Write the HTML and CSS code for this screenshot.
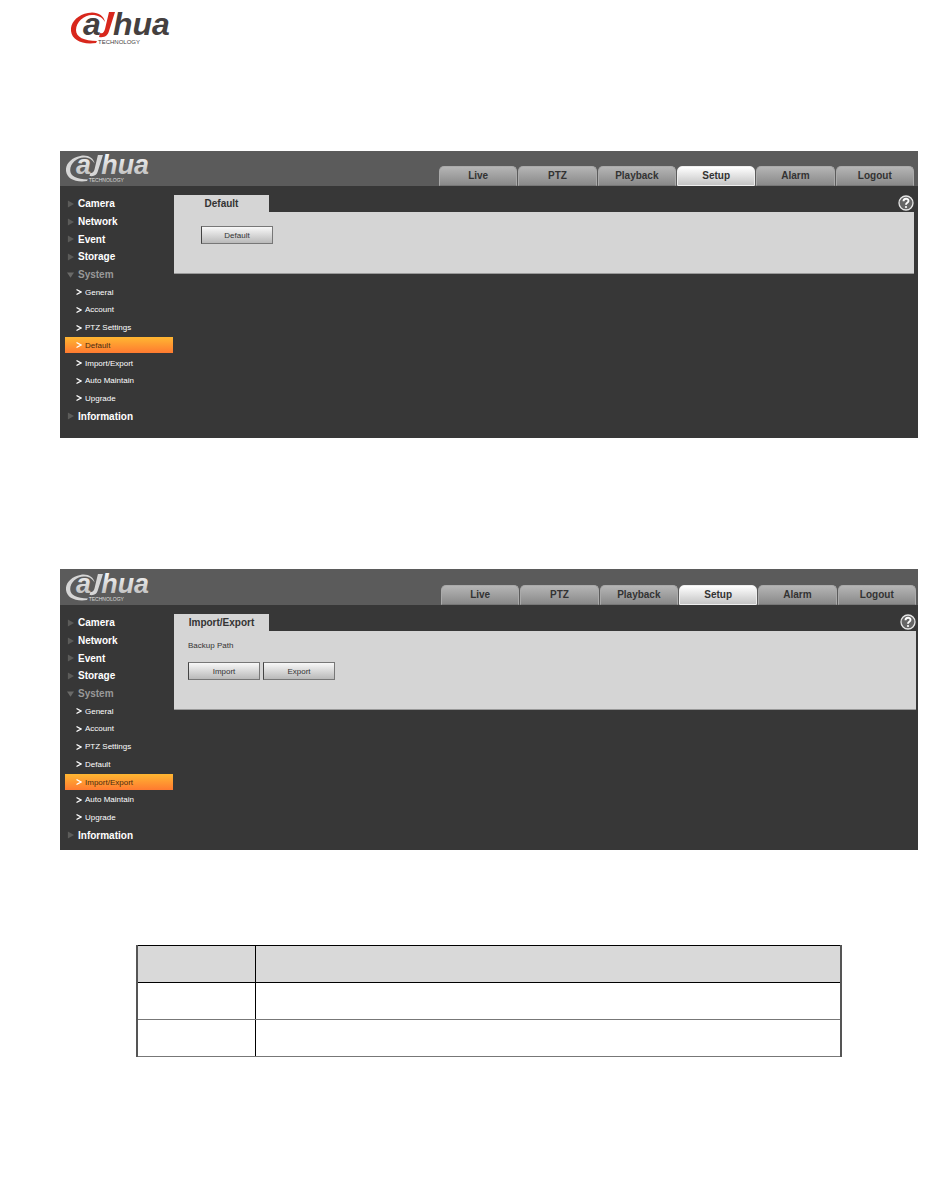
FILE: index.html
```html
<!doctype html>
<html lang="en">
<head>
  <meta charset="UTF-8" />
  <meta name="viewport" content="width=device-width, initial-scale=1.0" />
  <title>Dahua | System Setup</title>
  <link rel="stylesheet" href="styles.css">
</head>
<body>
  <!-- shared logo and icons -->
  <svg class="defs" width="0" height="0" aria-hidden="true">
    <defs>
      <linearGradient id="silver" x1="0" y1="0" x2="0" y2="1">
        <stop offset="0" stop-color="#fff" />
        <stop offset="1" stop-color="#b4b4b4" />
      </linearGradient>
      <symbol id="logo" viewBox="0 0 100 34">
        <path class="swoosh" d="M34 11C33 4 25 0 17 2C6 4 -1 12 0 20C1 29 11 34 25 32L26 30C13 30 5 26 5 19C5 11 13 4 21 4C27 4 31 6 34 11Z" />
        <text class="word" x="12" y="24">a</text>
        <path class="swoosh" d="M38 1H44L38 20C37 24 34 27 28 26L29 22C32 23 33 21 34 18Z" />
        <text class="word" x="42" y="24">hua</text>
        <text class="tag" x="27" y="33">TECHNOLOGY</text>
      </symbol>
      <symbol id="help" viewBox="0 0 16 16">
        <circle cx="8" cy="8" r="7" fill="#666" stroke="#e6e6e6" stroke-width="1.3" />
        <path d="M5.5 6.3C5.5 3 10.5 3 10.5 6C10.5 7.8 8 7.8 8 9.7" fill="none" stroke="#fff" stroke-width="1.9" />
        <circle cx="8" cy="12" r="1.1" fill="#fff" />
      </symbol>
      <symbol id="closed" viewBox="0 0 8 8"><path d="M1 0L8 4L1 8Z" fill="#5c5c5a" /></symbol>
      <symbol id="open" viewBox="0 0 8 8"><path d="M0 1H8L4 7Z" fill="#6a6a68" /></symbol>
      <symbol id="arrow" viewBox="0 0 6 6"><path d="M.5 .5L5 3L.5 5.5" fill="none" stroke="#fff" stroke-width="1.4" /></symbol>
    </defs>
  </svg>

  <header class="page-head">
    <svg class="logo logo-color" role="img" aria-label="alhua technology"><use href="#logo" /></svg>
  </header>

  <main class="page">
    <section class="device">
      <header class="topbar">
        <svg class="logo logo-silver" role="img" aria-label="alhua technology"><use href="#logo" /></svg>
        <nav class="tabs">
          <a href="#">Live</a>
          <a href="#">PTZ</a>
          <a href="#">Playback</a>
          <a href="#" class="active">Setup</a>
          <a href="#">Alarm</a>
          <a href="#">Logout</a>
        </nav>
      </header>
      <div class="work">
        <ul class="menu">
          <li><a class="group" href="#"><svg><use href="#closed" /></svg>Camera</a></li>
          <li><a class="group" href="#"><svg><use href="#closed" /></svg>Network</a></li>
          <li><a class="group" href="#"><svg><use href="#closed" /></svg>Event</a></li>
          <li><a class="group" href="#"><svg><use href="#closed" /></svg>Storage</a></li>
          <li><a class="group expanded" href="#"><svg><use href="#open" /></svg>System</a></li>
          <li><a class="item" href="#"><svg><use href="#arrow" /></svg>General</a></li>
          <li><a class="item" href="#"><svg><use href="#arrow" /></svg>Account</a></li>
          <li><a class="item" href="#"><svg><use href="#arrow" /></svg>PTZ Settings</a></li>
          <li><a class="item current" href="#"><svg><use href="#arrow" /></svg>Default</a></li>
          <li><a class="item" href="#"><svg><use href="#arrow" /></svg>Import/Export</a></li>
          <li><a class="item" href="#"><svg><use href="#arrow" /></svg>Auto Maintain</a></li>
          <li><a class="item" href="#"><svg><use href="#arrow" /></svg>Upgrade</a></li>
          <li><a class="group" href="#"><svg><use href="#closed" /></svg>Information</a></li>
        </ul>
        <div class="content">
          <div class="content-head">
            <h2>Default</h2>
            <button class="help" type="button" aria-label="Help"><svg><use href="#help" /></svg></button>
          </div>
          <div class="panel panel-default">
            <button class="btn" type="button">Default</button>
          </div>
        </div>
      </div>
    </section>

    <section class="device device-wide">
      <header class="topbar">
        <svg class="logo logo-silver" role="img" aria-label="alhua technology"><use href="#logo" /></svg>
        <nav class="tabs">
          <a href="#">Live</a>
          <a href="#">PTZ</a>
          <a href="#">Playback</a>
          <a href="#" class="active">Setup</a>
          <a href="#">Alarm</a>
          <a href="#">Logout</a>
        </nav>
      </header>
      <div class="work">
        <ul class="menu">
          <li><a class="group" href="#"><svg><use href="#closed" /></svg>Camera</a></li>
          <li><a class="group" href="#"><svg><use href="#closed" /></svg>Network</a></li>
          <li><a class="group" href="#"><svg><use href="#closed" /></svg>Event</a></li>
          <li><a class="group" href="#"><svg><use href="#closed" /></svg>Storage</a></li>
          <li><a class="group expanded" href="#"><svg><use href="#open" /></svg>System</a></li>
          <li><a class="item" href="#"><svg><use href="#arrow" /></svg>General</a></li>
          <li><a class="item" href="#"><svg><use href="#arrow" /></svg>Account</a></li>
          <li><a class="item" href="#"><svg><use href="#arrow" /></svg>PTZ Settings</a></li>
          <li><a class="item" href="#"><svg><use href="#arrow" /></svg>Default</a></li>
          <li><a class="item current" href="#"><svg><use href="#arrow" /></svg>Import/Export</a></li>
          <li><a class="item" href="#"><svg><use href="#arrow" /></svg>Auto Maintain</a></li>
          <li><a class="item" href="#"><svg><use href="#arrow" /></svg>Upgrade</a></li>
          <li><a class="group" href="#"><svg><use href="#closed" /></svg>Information</a></li>
        </ul>
        <div class="content">
          <div class="content-head">
            <h2>Import/Export</h2>
            <button class="help" type="button" aria-label="Help"><svg><use href="#help" /></svg></button>
          </div>
          <div class="panel panel-backup">
            <p>Backup Path</p>
            <div class="actions">
              <button class="btn" type="button">Import</button>
              <button class="btn" type="button">Export</button>
            </div>
          </div>
        </div>
      </div>
    </section>

    <div class="table-wrap">
      <table>
        <thead>
          <tr><th></th><th></th></tr>
        </thead>
        <tbody>
          <tr><td></td><td></td></tr>
          <tr><td></td><td></td></tr>
        </tbody>
      </table>
    </div>
  </main>
</body>
</html>
```
FILE: styles.css
```css
:root {
  --dark: #373737;
  --bar: #5b5b5b;
  --panel: #d5d5d5;
  --edge: 4px;
}
* { box-sizing: border-box; }
body {
  margin: 0;
  background: #fff;
  font-family: "Liberation Sans", Arial, sans-serif;
  font-size: 8px;
  color: #333;
}
a { color: inherit; text-decoration: none; }
.defs { position: absolute; }

/* logo */
.logo { display: block; flex: none; }
.word { font-size: 32px; font-weight: 700; font-style: italic; }
.tag { font-size: 6px; }
.logo-color { width: 100px; height: 34px; fill: #45403f; color: #d8271c; }
.logo-silver { width: 84px; height: 29px; fill: url(#silver); color: #d6d6d6; }
.swoosh { fill: currentColor; }

.page-head { padding: 11px 71px 0; }
.page { padding: 106px 32px 0 60px; }

/* device window */
.device {
  background: var(--dark);
  padding-bottom: 13px;
  margin-bottom: 131px;
}
.topbar {
  display: flex;
  justify-content: space-between;
  align-items: flex-end;
  height: 35px;
  padding: 0 var(--edge) 0 6px;
  background: var(--bar);
}
.device-wide {
  --edge: 2px;
  padding-bottom: 6px;
  margin-bottom: 95px;
}
.device-wide .topbar { height: 36px; }
.topbar .logo { align-self: center; }
.tabs { display: flex; gap: 1px; width: 475px; }
.tabs a {
  flex: 1;
  height: 20px;
  line-height: 18px;
  border: 1px solid #aaa;
  border-bottom-color: #777;
  border-radius: 5px 5px 0 0;
  background: linear-gradient(#b5b5b5, #898989);
  font-size: 10px;
  font-weight: 700;
  text-align: center;
}
.tabs .active {
  border-color: #eee;
  background: linear-gradient(#fff, #c4c4c4);
}
.work { display: flex; padding: 9px var(--edge) 0 5px; }

/* side menu */
.menu {
  display: grid;
  grid-auto-rows: 1fr;
  align-items: center;
  flex: none;
  width: 108px;
  height: 230px;
  margin: 0 1px 0 0;
  padding: 0;
  list-style: none;
  color: #fff;
}
.menu a {
  display: flex;
  align-items: center;
  height: 16px;
}
.menu .group { gap: 4px; padding-left: 2px; font-size: 10px; font-weight: 700; }
.menu .group svg { width: 7px; height: 8px; }
.menu .expanded { color: #999; }
.menu .item { gap: 3px; padding-left: 11px; }
.menu .item svg { width: 6px; height: 8px; }
.menu .current {
  background: linear-gradient(#ffb732, #ff7a30);
  color: #4a2c12;
}

/* content */
.content { flex: 1; }
.content-head { display: flex; justify-content: space-between; height: 17px; }
.content-head h2 {
  width: 95px;
  margin: 0;
  background: var(--panel);
  font-size: 10px;
  line-height: 17px;
  text-align: center;
}
.help {
  width: 16px;
  height: 16px;
  padding: 0;
  border: 0;
  background: none;
}
.help svg { display: block; width: 16px; height: 16px; }
.panel { background: var(--panel); border-bottom: 1px solid #999; }
.panel-default { height: 62px; padding: 14px 27px; }
.panel-backup { height: 79px; padding: 10px 14px; }
.panel p { margin: 0 0 11px; line-height: 10px; }
.actions { display: flex; gap: 3px; }
.btn {
  display: block;
  width: 72px;
  height: 18px;
  padding: 0;
  border: 1px solid #777;
  border-left-color: #444;
  background: linear-gradient(#f8f8f8, #b9b9b9);
  font: inherit;
  color: #333;
}

/* table */
.table-wrap { padding: 0 76px; }
table { width: 100%; border-collapse: collapse; table-layout: fixed; }
th, td { height: 37px; padding: 0; border: 1px solid #777; border-right-color: #000; }
th { border-color: #000; background: #d9d9d9; }
th:first-child { width: 118px; }
table tr > :first-child { border-left: 2px solid #555; }
table tr > :last-child { border-right: 2px solid #555; }
```
